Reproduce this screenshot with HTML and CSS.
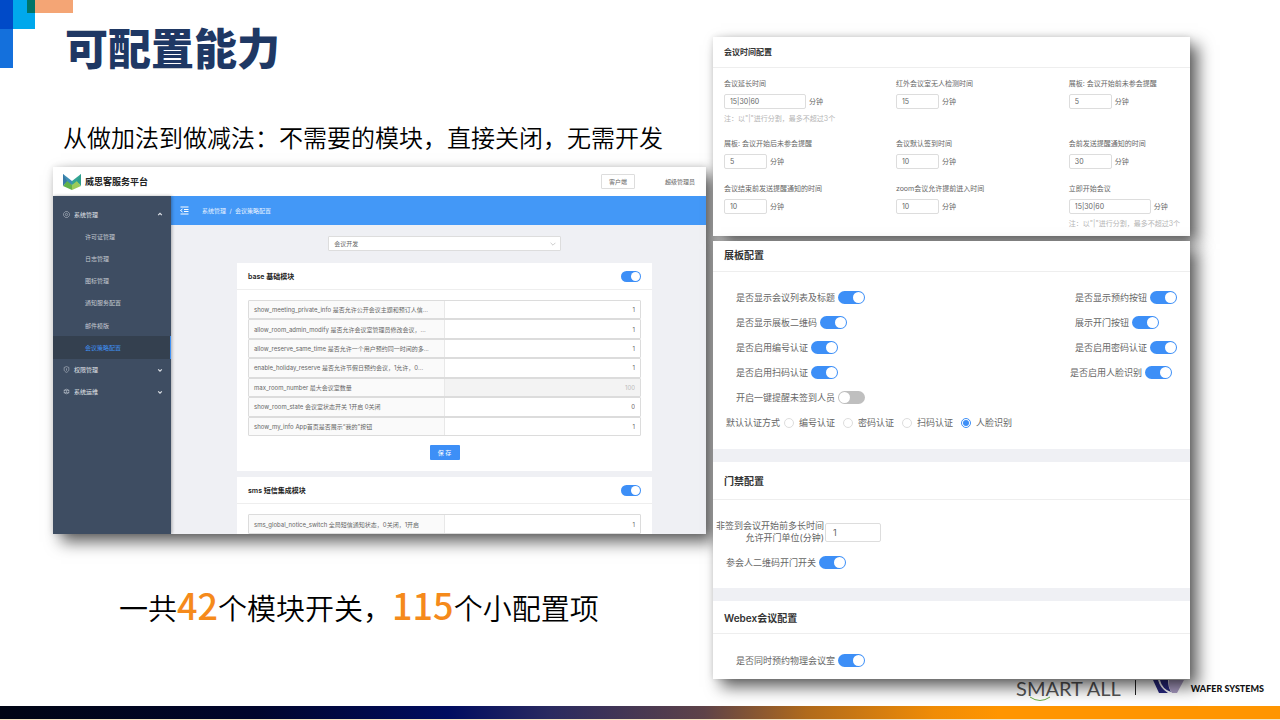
FILE: index.html
```html
<!DOCTYPE html>
<html lang="zh-CN">
<head>
<meta charset="utf-8">
<meta name="viewport" content="width=device-width, initial-scale=1">
<title>可配置能力</title>
<link rel="stylesheet" href="styles.css">
</head>
<body>
<svg class="corner" width="73" height="68" aria-hidden="true">
  <rect width="13" height="29" fill="#004ac8"/>
  <rect x="13" width="22" height="29" fill="#00a8ec"/>
  <rect x="27" width="8" height="13" fill="#007468"/>
  <rect x="35" width="38" height="13" fill="#f4a575"/>
  <rect y="29" width="13" height="39" fill="#1470dc"/>
</svg>
<main class="slide">
  <section class="intro">
    <h1 class="slide-title">可配置能力</h1>
    <p class="lead">从做加法到做减法：不需要的模块，直接关闭，无需开发</p>
    <div class="app shadowed">
      <header class="app-header">
        <svg class="app-logo" width="18" height="16" viewBox="0 0 18 16" aria-hidden="true">
          <path d="M0 0l9 7v4L0 9z" fill="#3f8fb5"/><path d="M18 0L9 7v4l9-2z" fill="#35a595"/>
          <path d="M0 12l4-5 5 4v5z" fill="#62b348"/><path d="M18 12l-4-5-5 4v5z" fill="#9ccb5a"/>
          <path d="M0 0l4 7-4 5z" fill="#3879a5"/><path d="M18 0l-4 7 4 5z" fill="#2f9f8c"/>
        </svg>
        <span class="app-name">威思客服务平台</span>
        <button class="client-button" type="button">客户端</button>
        <span class="user-name">超级管理员</span>
      </header>
      <div class="app-body">
        <nav class="sidebar">
          <a class="nav-item nav-group" href="#"><svg class="nav-icon" viewBox="0 0 12 12"><circle cx="6" cy="6" r="2"/><path d="M4 1h4l3 3v4l-3 3H4L1 8V4z"/></svg>系统管理<svg class="caret" viewBox="0 0 10 10"><path d="M2 7l3-3 3 3"/></svg></a>
          <a class="nav-item" href="#">许可证管理</a>
          <a class="nav-item" href="#">日志管理</a>
          <a class="nav-item" href="#">图标管理</a>
          <a class="nav-item" href="#">通知服务配置</a>
          <a class="nav-item" href="#">邮件模版</a>
          <a class="nav-item nav-active" href="#">会议策略配置</a>
          <a class="nav-item nav-group" href="#"><svg class="nav-icon" viewBox="0 0 12 12"><path d="M6 1l4 1.500v4c0 2-2 3.500-4 4.500-2-1-4-2.500-4-4.500v-4z"/><path d="M6 4v4"/></svg>权限管理<svg class="caret" viewBox="0 0 10 10"><path d="M2 4l3 3 3-3"/></svg></a>
          <a class="nav-item nav-group" href="#"><svg class="nav-icon" viewBox="0 0 12 12"><circle cx="6" cy="6" r="4"/><path d="M1 4h10M1 8h10M6 4v4"/></svg>系统运维<svg class="caret" viewBox="0 0 10 10"><path d="M2 4l3 3 3-3"/></svg></a>
        </nav>
        <div class="workspace">
          <div class="crumb-bar">
            <svg class="fold-icon" width="9" height="9" viewBox="0 0 18 18" aria-hidden="true"><path d="M1 2h16M8 7h9M8 11h9M1 16h16M5 6L1 9l4 3"/></svg>
            <span>系统管理&nbsp; /&nbsp; 会议策略配置</span>
          </div>
          <div class="content">
            <div class="module-picker">
              <select class="module-select" aria-label="模块"><option>会议开发</option></select>
              <svg class="picker-arrow" width="6" height="6" viewBox="0 0 10 10" aria-hidden="true"><path d="M1 3l4 4 4-4"/></svg>
            </div>
            <section class="card">
              <header class="card-header"><label for="base-on">base 基础模块</label><input id="base-on" class="toggle toggle-small" type="checkbox" checked></header>
              <div class="options">
                <div class="option"><label for="o1">show_meeting_private_info 是否允许公开会议主题和预订人信...</label><input id="o1" value="1"></div>
                <div class="option"><label for="o2">allow_room_admin_modify 是否允许会议室管理员修改会议，...</label><input id="o2" value="1"></div>
                <div class="option"><label for="o3">allow_reserve_same_time 是否允许一个用户预约同一时间的多...</label><input id="o3" value="1"></div>
                <div class="option"><label for="o4">enable_holiday_reserve 是否允许节假日预约会议，1允许，0...</label><input id="o4" value="1"></div>
                <div class="option"><label for="o5">max_room_number 最大会议室数量</label><input id="o5" value="100" disabled></div>
                <div class="option"><label for="o6">show_room_state 会议室状态开关 1开启 0关闭</label><input id="o6" value="0"></div>
                <div class="option"><label for="o7">show_my_info App首页是否展示“我的”按钮</label><input id="o7" value="1"></div>
              </div>
              <button class="save-button" type="button">保 存</button>
            </section>
            <section class="card">
              <header class="card-header"><label for="sms-on">sms 短信集成模块</label><input id="sms-on" class="toggle toggle-small" type="checkbox" checked></header>
              <div class="options options-single">
                <div class="option"><label for="s1">sms_global_notice_switch 全局短信通知状态，0关闭，1开启</label><input id="s1" value="1"></div>
              </div>
            </section>
          </div>
        </div>
      </div>
    </div>
    <p class="summary">一共<strong>42</strong>个模块开关，<strong>115</strong>个小配置项</p>
  </section>

  <section class="panels">
    <section class="panel shadowed">
      <h2 class="panel-title title-compact">会议时间配置</h2>
      <div class="time-grid">
        <div class="field"><label for="t1">会议延长时间</label><div><input id="t1" class="box box-wide" value="15|30|60"> 分钟</div><small>注：以"|"进行分割，最多不超过3个</small></div>
        <div class="field"><label for="t2">红外会议室无人检测时间</label><div><input id="t2" class="box" value="15"> 分钟</div></div>
        <div class="field"><label for="t3">展板: 会议开始前未参会提醒</label><div><input id="t3" class="box" value="5"> 分钟</div></div>
        <div class="field"><label for="t4">展板: 会议开始后未参会提醒</label><div><input id="t4" class="box" value="5"> 分钟</div></div>
        <div class="field"><label for="t5">会议默认签到时间</label><div><input id="t5" class="box" value="10"> 分钟</div></div>
        <div class="field"><label for="t6">会前发送提醒通知的时间</label><div><input id="t6" class="box" value="30"> 分钟</div></div>
        <div class="field"><label for="t7">会议结束前发送提醒通知的时间</label><div><input id="t7" class="box" value="10"> 分钟</div></div>
        <div class="field"><label for="t8">zoom会议允许提前进入时间</label><div><input id="t8" class="box" value="10"> 分钟</div></div>
        <div class="field"><label for="t9">立即开始会议</label><div><input id="t9" class="box box-wide" value="15|30|60"> 分钟</div><small>注：以"|"进行分割，最多不超过3个</small></div>
      </div>
    </section>

    <div class="stack shadowed">
      <section class="panel">
        <h2 class="panel-title">展板配置</h2>
        <div class="switches">
          <div class="switch-column">
            <label class="setting">是否显示会议列表及标题<input class="toggle" type="checkbox" checked></label>
            <label class="setting">是否显示展板二维码<input class="toggle" type="checkbox" checked></label>
            <label class="setting">是否启用编号认证<input class="toggle" type="checkbox" checked></label>
            <label class="setting">是否启用扫码认证<input class="toggle" type="checkbox" checked></label>
            <label class="setting">开启一键提醒未签到人员<input class="toggle" type="checkbox"></label>
          </div>
          <div class="switch-column">
            <label class="setting">是否显示预约按钮<input class="toggle" type="checkbox" checked></label>
            <label class="setting">展示开门按钮<input class="toggle" type="checkbox" checked></label>
            <label class="setting">是否启用密码认证<input class="toggle" type="checkbox" checked></label>
            <label class="setting setting-outdent">是否启用人脸识别<input class="toggle" type="checkbox" checked></label>
          </div>
        </div>
        <div class="auth" role="radiogroup" aria-labelledby="auth-label">
          <span id="auth-label">默认认证方式</span>
          <div class="radios">
            <label><input type="radio" name="auth">编号认证</label>
            <label><input type="radio" name="auth">密码认证</label>
            <label><input type="radio" name="auth">扫码认证</label>
            <label><input type="radio" name="auth" checked>人脸识别</label>
          </div>
        </div>
      </section>
      <section class="panel">
        <h2 class="panel-title title-roomy">门禁配置</h2>
        <div class="door">
          <div class="door-row"><label for="door">非签到会议开始前多长时间<br>允许开门单位(分钟)</label><input id="door" class="box box-door" value="1"></div>
          <label class="setting">参会人二维码开门开关<input class="toggle" type="checkbox" checked></label>
        </div>
      </section>
      <section class="panel">
        <h2 class="panel-title title-medium">Webex会议配置</h2>
        <div class="webex"><label class="setting">是否同时预约物理会议室<input class="toggle" type="checkbox" checked></label></div>
      </section>
    </div>
  </section>
</main>
<footer class="footer">
  <div class="brands">
    <span class="smart">SMART ALL<svg class="smile" width="22" height="6" viewBox="0 0 22 6" aria-hidden="true"><path d="M1 1q10 7 20 0"/></svg></span>
    <span class="divider"></span>
    <svg class="wafer-mark" width="31" height="14" viewBox="0 0 31 14" aria-hidden="true"><path d="M0 0h5q2 8 10 13H6z" fill="#29297f"/><path d="M7 0h8q0 7 3 12Q9 9 7 0z" fill="#29297f"/><path d="M16 0h15l-7 13h-5q-4-5-3-13z" fill="#ab9dc4"/></svg>
    <span class="wafer">WAFER SYSTEMS</span>
  </div>
  <div class="color-bar"></div>
</footer>
</body>
</html>
```
FILE: styles.css
```css
* { box-sizing: border-box; }
body {
  margin: 0;
  min-height: 100vh;
  display: flex;
  flex-direction: column;
  background: #fff;
  color: #000;
  font-family: Inter, "Noto Sans CJK SC", sans-serif;
  overflow-x: hidden;
}
h1, h2, p { margin: 0; }
input, button, select { font: inherit; color: inherit; }
a { text-decoration: none; }
.corner { position: absolute; left: 0; top: 0; }

.slide {
  position: relative;
  z-index: 1;
  flex: 1;
  display: grid;
  grid-template-columns: 653fr 477fr;
  gap: 7px;
  padding: 0 90px 0 53px;
}
.intro { display: flex; flex-direction: column; padding-top: 24px; min-width: 0; }
.slide-title {
  padding-left: 12px;
  font: 900 43px/44px "Noto Sans CJK SC", sans-serif;
  color: #1f3864;
}
.lead {
  margin: 53px 0 14px;
  padding-left: 10px;
  font: 350 24px/32px "Noto Sans CJK SC", sans-serif;
  white-space: nowrap;
}
.shadowed { box-shadow: 8px 8px 15px rgba(0, 0, 0, .62), 0 0 6px rgba(0, 0, 0, .12); }

.app {
  height: 367px;
  display: flex;
  flex-direction: column;
  overflow: hidden;
  background: #fff;
  color: #666;
  font-size: 6px;
}
.app-header { display: flex; align-items: center; flex: 0 0 29px; padding: 0 11px 0 10px; }
.app-name { margin-left: 4px; margin-right: auto; font-size: 9px; font-weight: 700; color: #222; }
.client-button {
  height: 15px;
  padding: 0 7px;
  border: 1px solid #ddd;
  border-radius: 1px;
  background: #fff;
  margin-right: 30px;
}
.app-body { flex: 1; display: flex; min-height: 0; }
.sidebar {
  flex: 0 0 118px;
  display: grid;
  grid-template-rows: repeat(9, 1fr);
  padding: 7px 0 131px;
  background: #3e4d62;
  box-shadow: 1px 0 3px rgba(0, 0, 0, .3);
  z-index: 1;
}
.nav-item { display: flex; align-items: center; padding-left: 32px; color: #c5cad1; }
.nav-group { padding: 0 8px 0 10px; color: #e0e4e8; }
.nav-icon { width: 7px; height: 7px; margin-right: 4px; fill: none; stroke: #bcc3cd; }
.caret { width: 6px; height: 6px; margin-left: auto; fill: none; stroke: #dde1e6; stroke-width: 2; }
.nav-active { background: #34404f; color: #3f91f5; border-right: 1px solid #3f91f5; }
.workspace { flex: 1; display: flex; flex-direction: column; min-width: 0; background: #eff0f4; }
.crumb-bar {
  flex: 0 0 29px;
  display: flex;
  align-items: center;
  gap: 13px;
  padding-left: 9px;
  background: #4398f7;
  color: #e8f2ff;
}
.fold-icon { fill: none; stroke: #fff; stroke-width: 2; }
.content { display: flex; flex-direction: column; gap: 6px; padding: 11px 54px 0 66px; }
.module-picker { position: relative; width: 56%; margin: 0 auto 6px; }
.module-select {
  display: block;
  appearance: none;
  width: 100%;
  height: 15px;
  padding: 0 5px;
  border: 1px solid #ddd;
  border-radius: 1px;
  background: #fff;
}
.picker-arrow { position: absolute; right: 5px; top: 5px; fill: none; stroke: #aaa; }
.card { background: #fff; padding-bottom: 11px; }
.card-header {
  display: flex;
  align-items: center;
  justify-content: space-between;
  height: 27px;
  padding: 0 11px;
  border-bottom: 1px solid #eee;
  font-size: 7px;
  font-weight: 600;
  color: #222;
}
.options { display: grid; grid-auto-rows: 1fr; height: 136px; margin: 10px 11px 9px; }
.options-single { height: 20px; }
.option {
  display: grid;
  grid-template-columns: 1fr 1fr;
  border: 1px solid #dcdcdc;
  border-radius: 1px;
}
.option label {
  display: flex;
  align-items: center;
  padding-left: 5px;
  background: #fafafa;
  border-right: 1px solid #e8e8e8;
  white-space: nowrap;
}
.option input { min-width: 0; width: 100%; height: 100%; border: 0; padding: 0 5px; text-align: right; background: #fff; }
.option input:disabled { background: #f3f3f3; color: #bbb; }
.save-button {
  display: block;
  width: 30px;
  height: 15px;
  margin: 0 auto;
  padding: 0;
  border: 0;
  border-radius: 1px;
  background: #3d8ff7;
  color: #fff;
}

.toggle {
  appearance: none;
  display: flex;
  flex: none;
  width: 27px;
  height: 13px;
  margin: 0;
  padding: 1px;
  border-radius: 7px;
  background: #bfbfbf;
}
.toggle::before { content: ""; height: 100%; aspect-ratio: 1; border-radius: 50%; background: #fff; }
.toggle:checked { background: #3d8ff7; justify-content: flex-end; }
.toggle-small { width: 20px; height: 11px; }

.summary {
  margin-top: 50px;
  padding-left: 66px;
  font: 350 29px/40px "Noto Sans CJK SC", sans-serif;
  white-space: nowrap;
}
.summary strong { font-size: 36px; font-weight: 500; color: #f58a1b; }

.panels { display: flex; flex-direction: column; gap: 5px; padding-top: 37px; min-width: 0; color: #666; }
.panel { background: #fff; }
.panel-title {
  height: 31px;
  padding: 0 11px;
  border-bottom: 1px solid #eee;
  font-size: 10px;
  line-height: 28px;
  font-weight: 600;
  color: #333;
}
.title-compact { font-size: 8px; line-height: 30px; font-weight: 700; }
.title-roomy { height: 38px; line-height: 38px; }
.title-medium { height: 33px; line-height: 34px; }
.time-grid {
  display: grid;
  grid-template-columns: 172fr 173fr 110fr;
  row-gap: 15px;
  padding: 11px 10px 7px 11px;
  font-size: 7px;
  line-height: 10px;
}
.field { display: flex; flex-direction: column; gap: 5px; white-space: nowrap; }
.field > div { display: flex; align-items: center; gap: 3px; }
.field small { font-size: 7px; color: #b5b5b5; }
.box { width: 43px; height: 15px; padding: 0 5px; border: 1px solid #ddd; border-radius: 2px; background: #fff; }
.box-wide { width: 82px; }
.stack { display: flex; flex-direction: column; gap: 13px; background: #eff0f4; font-size: 9px; }
.switches { display: flex; justify-content: space-between; padding: 13px 13px 0 23px; }
.setting { display: flex; align-items: center; gap: 3px; height: 25px; white-space: nowrap; }
.setting-outdent { margin-left: -5px; }
.auth { display: flex; align-items: center; gap: 4px; height: 25px; margin-bottom: 14px; padding-left: 13px; }
.radios { display: flex; gap: 8px; }
.radios label { display: flex; align-items: center; gap: 5px; }
.radios input {
  appearance: none;
  display: grid;
  place-items: center;
  width: 10px;
  height: 10px;
  margin: 0;
  border: 1px solid #ddd;
  border-radius: 50%;
}
.radios input:checked { border-color: #3d8ff7; }
.radios input:checked::before { content: ""; width: 6px; height: 6px; border-radius: 50%; background: #3d8ff7; }
.door { padding: 19px 0 13px 3px; }
.door-row { display: flex; align-items: center; gap: 1px; line-height: 12px; text-align: right; height: 26px; margin-bottom: 5px; }
.box-door { width: 56px; height: 19px; padding: 0 7px; }
.door .setting { padding-left: 10px; }
.webex { padding: 14px 0 6px 23px; }

.footer { display: flex; flex-direction: column; }
.brands { display: flex; align-items: flex-start; justify-content: flex-end; height: 26px; padding-right: 16px; }
.smart { position: relative; font: 400 20px/16px Lato, sans-serif; color: #555; }
.smile { position: absolute; left: 13px; top: 16px; fill: none; stroke: #6ab04a; stroke-width: 1; }
.divider { width: 1px; height: 15px; margin: 0 17px 0 14px; background: #222; }
.wafer-mark { margin-right: 7px; }
.wafer { font: 900 9px/18px Lato, sans-serif; color: #111; }
.color-bar {
  height: 14px;
  border-bottom: 1px solid #f3e3c0;
  background: linear-gradient(90deg, #000414 0%, #00052c 20%, #000c60 35%, #2a2a60 43%, #5e4248 55%, #b06a1c 63%, #f08c06 73%, #ff9500 78%);
}
```
